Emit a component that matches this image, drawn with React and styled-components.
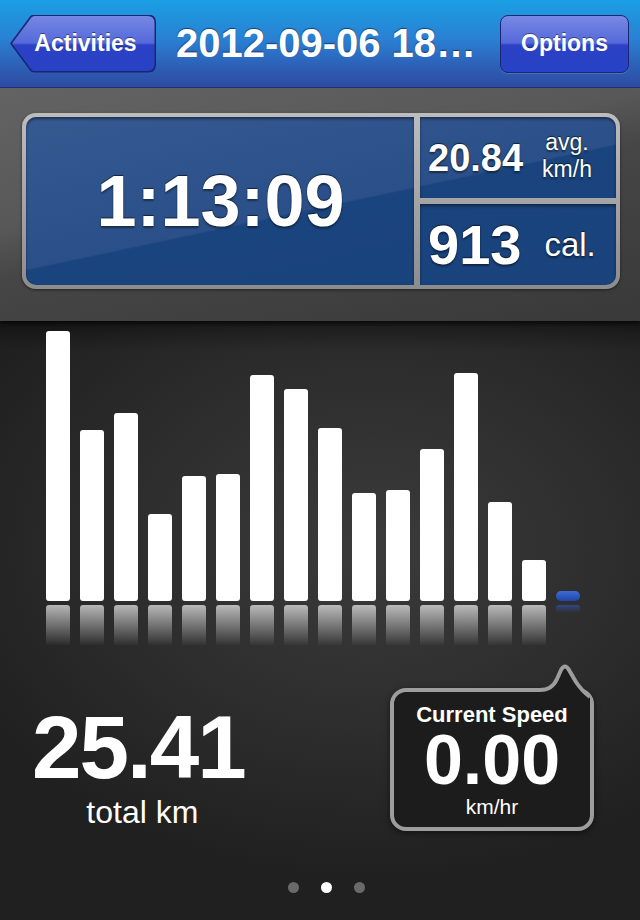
import React from 'react';
import styled, { createGlobalStyle } from 'styled-components';

const GlobalStyle = createGlobalStyle`
  html, body {
    margin: 0;
    padding: 0;
    background: #222;
  }
  body {
    font-family: "Liberation Sans", Arial, sans-serif;
    -webkit-font-smoothing: antialiased;
  }
`;

const Screen = styled.div`
  width: 640px;
  height: 920px;
  overflow: hidden;
  display: flex;
  flex-direction: column;
  color: #fff;
`;

// ---- nav bar ----
const NavBar = styled.header`
  height: 88px;
  flex: none;
  display: flex;
  align-items: center;
  justify-content: space-between;
  padding: 0 11px 0 10px;
  box-sizing: border-box;
  background: linear-gradient(#1b9fe4 0%, #2a80d3 45%, #2d5cb3 80%, #2e4ba3 100%);
  border-bottom: 1px solid #1f3478;
`;

const BACK_OUTER = "path('M0 29 L20 2 Q21.5 0 24 0 L138 0 Q146 0 146 8 L146 50 Q146 58 138 58 L24 58 Q21.5 58 20 56 Z')";
const BACK_INNER = "path('M2 29 L21.3 3 Q22.5 1.5 24.5 1.5 L137.5 1.5 Q144.5 1.5 144.5 8.5 L144.5 49.5 Q144.5 56.5 137.5 56.5 L24.5 56.5 Q22.5 56.5 21.3 55 Z')";

const buttonFace = `
  background: linear-gradient(#7789e4 0%, #5569da 48%, #2c41c5 52%, #2742c6 100%);
  color: #fff;
  font-weight: bold;
  font-size: 23px;
  text-shadow: 0 -1px 0 rgba(0, 0, 0, 0.45);
  display: flex;
  align-items: center;
  justify-content: center;
`;

const BackButton = styled.div`
  width: 146px;
  height: 58px;
  flex: none;
  clip-path: ${BACK_OUTER};
  background: #1a2670;
`;

const BackFace = styled.div`
  ${buttonFace}
  width: 100%;
  height: 100%;
  padding-left: 5px;
  box-sizing: border-box;
  clip-path: ${BACK_INNER};
`;

const BarButton = styled.div`
  ${buttonFace}
  width: 129px;
  height: 58px;
  flex: none;
  box-sizing: border-box;
  border: 1.5px solid #1a2670;
  border-radius: 8px;
  box-shadow: 0 1px 0 rgba(255, 255, 255, 0.15);
`;

const Title = styled.h1`
  margin: 0 4px 0 0;
  font-size: 40px;
  font-weight: bold;
  white-space: nowrap;
  text-shadow: 0 -1px 1px rgba(0, 0, 0, 0.5);
`;

// ---- summary panel ----
const StatsArea = styled.section`
  height: 233px;
  flex: none;
  padding: 25px 0 0 22px;
  box-sizing: border-box;
  background: linear-gradient(168deg, #636363 0%, #585858 38%, #464646 52%, #393939 100%);
  box-shadow: 0 3px 4px rgba(0, 0, 0, 0.6);
  position: relative;
  z-index: 1;
`;

const Panel = styled.div`
  width: 598px;
  height: 176px;
  box-sizing: border-box;
  padding: 4px;
  border-radius: 14px;
  background: linear-gradient(#bdbdbd, #8c8c8c);
  box-shadow: 0 1px 3px rgba(0, 0, 0, 0.5);
  display: grid;
  grid-template-columns: 388px 1fr;
  grid-template-rows: 1fr 1fr;
  gap: 6px;
`;

const Cell = styled.div`
  grid-row: ${({ $tall }) => ($tall ? '1 / span 2' : 'auto')};
  border-radius: ${({ $corners }) => $corners};
  background: linear-gradient(168deg, #3d6198 0%, #2b5089 26%, #1a447e 26.2%, #173f78 100%) fixed;
  box-shadow: inset 0 2px 3px rgba(0, 0, 0, 0.45);
  display: flex;
  align-items: center;
  justify-content: ${({ $tall }) => ($tall ? 'center' : 'flex-start')};
  padding: ${({ $tall }) => ($tall ? '0 0 0 1px' : '0 0 0 8px')};
  box-sizing: border-box;
  text-shadow: 0 -1px 1px rgba(0, 0, 0, 0.6), 0 2px 2px rgba(0, 0, 0, 0.45);
`;

const BigValue = styled.span`
  font-size: ${({ $size }) => $size}px;
  font-weight: bold;
  line-height: 1;
`;

const UnitStack = styled.span`
  display: flex;
  flex-direction: column;
  align-items: center;
  margin: -4px 0 0 19px;
  font-size: 23px;
  line-height: 27px;
`;

const Unit = styled.span`
  font-size: ${({ $size }) => $size}px;
  margin-left: ${({ $gap }) => $gap}px;
  line-height: 1;
`;

// ---- chart area ----
const Dashboard = styled.main`
  flex: 1;
  display: flex;
  flex-direction: column;
  background:
    linear-gradient(rgba(0, 0, 0, 0.35), rgba(0, 0, 0, 0) 30px),
    radial-gradient(ellipse 70% 55% at 58% 38%, #3b3b3b 0%, #2d2d2d 55%, #202020 100%);
`;

const Chart = styled.div`
  display: flex;
  gap: 10px;
  padding: 10px 0 0 46px;
`;

const Column = styled.div`
  width: 24px;
  display: flex;
  flex-direction: column;
`;

const BarSlot = styled.div`
  height: 270px;
  display: flex;
  align-items: flex-end;
`;

const Bar = styled.div`
  width: 100%;
  background: ${({ $current }) => ($current ? 'linear-gradient(#3f6bd0, #1e46ad)' : '#fff')};
  border-radius: ${({ $current }) => ($current ? '5px' : '3px')};
`;

const Reflection = styled.div`
  width: 100%;
  margin-top: 4px;
  border-radius: 3px 3px 0 0;
  background: ${({ $current }) =>
    $current
      ? 'linear-gradient(rgba(50, 90, 200, 0.55), rgba(50, 90, 200, 0))'
      : 'linear-gradient(rgba(255, 255, 255, 0.66), rgba(255, 255, 255, 0.18) 75%, rgba(255, 255, 255, 0.02))'};
`;

const BottomRow = styled.div`
  display: flex;
  justify-content: space-between;
  align-items: flex-start;
  margin-top: 19px;
  padding: 0 46px 0 32px;
`;

const Total = styled.div`
  margin-top: 39px;
  display: flex;
  flex-direction: column;
  align-items: center;
`;

const TotalValue = styled.div`
  font-size: 89px;
  font-weight: bold;
  letter-spacing: -2px;
  line-height: 1;
`;

const TotalLabel = styled.div`
  margin-top: 4px;
  font-size: 32px;
  line-height: 1;
  padding-left: 8px;
`;

const Bubble = styled.div`
  position: relative;
  width: 204px;
  padding-top: 24px;
`;

const Tail = styled.svg`
  position: absolute;
  top: 0;
  left: 0;
  overflow: visible;
`;

const BubbleBox = styled.div`
  height: 143px;
  box-sizing: border-box;
  border: 4px solid #9d9d9d;
  border-radius: 16px;
  background: #1c1c1c;
  box-shadow: 0 2px 6px rgba(0, 0, 0, 0.5);
  padding-top: 12px;
  display: flex;
  flex-direction: column;
  align-items: center;
  text-align: center;
`;

const BubbleLabel = styled.div`
  font-size: 22px;
  font-weight: bold;
  line-height: 22px;
`;

const BubbleValue = styled.div`
  margin-top: 6px;
  font-size: 70px;
  font-weight: bold;
  line-height: 56px;
`;

const BubbleUnit = styled.div`
  margin-top: 8px;
  font-size: 21px;
  line-height: 21px;
`;

const Dots = styled.div`
  display: flex;
  justify-content: center;
  gap: 22px;
  margin-top: 51px;
  padding-left: 12px;
`;

const Dot = styled.span`
  width: 11px;
  height: 11px;
  border-radius: 50%;
  background: ${({ $active }) => ($active ? '#fff' : '#6a6a6a')};
`;

const laps = [270, 171, 188, 87, 125, 127, 226, 212, 173, 108, 111, 152, 228, 99, 41];

export default function App() {
  return (
    <Screen>
      <GlobalStyle />
      <NavBar>
        <BackButton>
          <BackFace>Activities</BackFace>
        </BackButton>
        <Title>2012-09-06 18…</Title>
        <BarButton>Options</BarButton>
      </NavBar>

      <StatsArea>
        <Panel>
          <Cell $tall $corners="10px 0 0 10px">
            <BigValue $size={72}>1:13:09</BigValue>
          </Cell>
          <Cell $corners="0 10px 0 0">
            <BigValue $size={38}>20.84</BigValue>
            <UnitStack>
              <span>avg.</span>
              <span>km/h</span>
            </UnitStack>
          </Cell>
          <Cell $corners="0 0 10px 0">
            <BigValue $size={56}>913</BigValue>
            <Unit $size={33} $gap={23}>cal.</Unit>
          </Cell>
        </Panel>
      </StatsArea>

      <Dashboard>
        <Chart>
          {laps.map((h, i) => (
            <Column key={i}>
              <BarSlot>
                <Bar style={{ height: h }} />
              </BarSlot>
              <Reflection style={{ height: Math.min(h, 40) }} />
            </Column>
          ))}
          <Column>
            <BarSlot>
              <Bar $current style={{ height: 10 }} />
            </BarSlot>
            <Reflection $current style={{ height: 8 }} />
          </Column>
        </Chart>

        <BottomRow>
          <Total>
            <TotalValue>25.41</TotalValue>
            <TotalLabel>total km</TotalLabel>
          </Total>
          <Bubble>
            <Tail width="204" height="44" viewBox="0 0 204 44">
              <path
                d="M150 26 Q162 26 167 15 L171 6 Q175 -1 179 6 L186 18 Q192 27 200 33 L200 44 L150 44 Z"
                fill="#1c1c1c"
              />
              <path
                d="M150 26 Q162 26 167 15 L171 6 Q175 -1 179 6 L186 18 Q192 27 200 33"
                fill="none"
                stroke="#9d9d9d"
                strokeWidth="4"
                strokeLinejoin="round"
              />
            </Tail>
            <BubbleBox>
              <BubbleLabel>Current Speed</BubbleLabel>
              <BubbleValue>0.00</BubbleValue>
              <BubbleUnit>km/hr</BubbleUnit>
            </BubbleBox>
          </Bubble>
        </BottomRow>

        <Dots>
          <Dot />
          <Dot $active />
          <Dot />
        </Dots>
      </Dashboard>
    </Screen>
  );
}
